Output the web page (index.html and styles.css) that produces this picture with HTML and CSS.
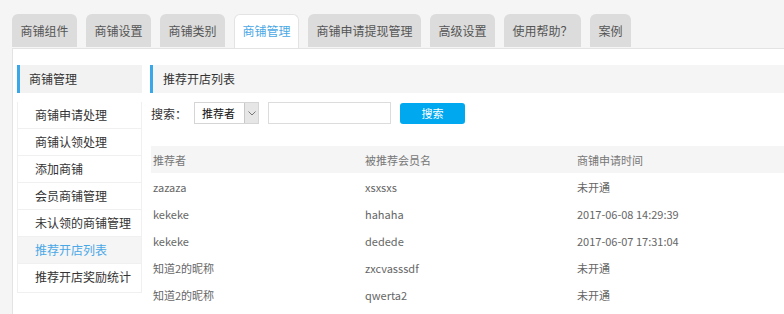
FILE: index.html
```html
<!DOCTYPE html>
<html>

<head>
    <meta charset="utf-8">
    <link rel="stylesheet" href="styles.css">
</head>

<body>
    <div class="tabs">
        <div class="tab">商铺组件</div>
        <div class="tab">商铺设置</div>
        <div class="tab">商铺类别</div>
        <div class="tab tab_active">商铺管理</div>
        <div class="tab">商铺申请提现管理</div>
        <div class="tab">高级设置</div>
        <div class="tab">使用帮助？</div>
        <div class="tab">案例</div>
    </div>
    <div class="panel">
        <div class="side">
            <div class="side_title">商铺管理</div>
            <ul class="side_menu">
                <li>商铺申请处理</li>
                <li>商铺认领处理</li>
                <li>添加商铺</li>
                <li>会员商铺管理</li>
                <li>未认领的商铺管理</li>
                <li class="current">推荐开店列表</li>
                <li>推荐开店奖励统计</li>
            </ul>
        </div>
        <div class="main">
            <div class="main_title">推荐开店列表</div>
            <div class="search">
                <span class="search_label">搜索：</span>
                <div class="select">
                    <span class="select_text">推荐者</span>
                    <span class="select_arrow">
                        <svg width="8" height="5" viewBox="0 0 8 5"><path d="M0.5 0.5 L4 4 L7.5 0.5" fill="none" stroke="#777" stroke-width="1"/></svg>
                    </span>
                </div>
                <input type="text" class="search_input">
                <button class="search_btn">搜索</button>
            </div>
            <table class="list">
                <thead>
                    <tr>
                        <th>推荐者</th>
                        <th>被推荐会员名</th>
                        <th>商铺申请时间</th>
                    </tr>
                </thead>
                <tbody>
                    <tr><td>zazaza</td><td>xsxsxs</td><td>未开通</td></tr>
                    <tr><td>kekeke</td><td>hahaha</td><td>2017-06-08 14:29:39</td></tr>
                    <tr><td>kekeke</td><td>dedede</td><td>2017-06-07 17:31:04</td></tr>
                    <tr><td>知道2的昵称</td><td>zxcvasssdf</td><td>未开通</td></tr>
                    <tr><td>知道2的昵称</td><td>qwerta2</td><td>未开通</td></tr>
                </tbody>
            </table>
        </div>
    </div>
</body>

</html>
```

FILE: styles.css
```css
body {
    margin: 0;
    padding: 14px 0 0 12px;
    background-color: #f5f5f5;
    font-family: "Noto Sans CJK SC", sans-serif;
    font-size: 12px;
    color: #333;
    overflow: hidden;
}

.tabs {
    display: flex;
    gap: 9px;
    position: relative;
    z-index: 1;
}

.tab {
    height: 33px;
    line-height: 33px;
    padding: 0 8.5px;
    background-color: #dcdcdc;
    border-radius: 6px 6px 0 0;
    color: #555;
}

.tab_active {
    background-color: #fff;
    color: #4aa8e6;
    line-height: 31px;
    border: 1px solid #e3e3e3;
    border-bottom: none;
    padding: 0 7.5px;
}

.panel {
    display: flex;
    gap: 8px;
    background-color: #fff;
    border-top: 1px solid #e3e3e3;
    border-left: 1px solid #e3e3e3;
    padding: 16px 0 40px 4px;
}

.side {
    width: 125px;
    flex-shrink: 0;
}

.side_title {
    height: 28px;
    line-height: 28px;
    background-color: #f2f2f2;
    border-left: 3px solid #3aa8e8;
    padding-left: 9px;
    color: #333;
}

.side_menu {
    list-style: none;
    margin: 9px 0 0 0;
    padding: 0;
    border: 1px solid #f0f0f0;
    border-top: none;
}

.side_menu li {
    height: 26px;
    line-height: 26px;
    padding-left: 17px;
    border-bottom: 1px solid #f0f0f0;
    color: #333;
}

.side_menu li:last-child {
    border-bottom: none;
    height: 28px;
}

.side_menu .current {
    background-color: #f5f5f5;
    color: #4aa8e6;
}

.main {
    flex: 1;
    overflow: hidden;
}

.main_title {
    height: 28px;
    line-height: 28px;
    background-color: #f5f5f5;
    border-left: 3px solid #3aa8e8;
    padding-left: 10px;
    color: #333;
}

.search {
    display: flex;
    align-items: center;
    margin-top: 9px;
    height: 22px;
    padding-left: 1px;
}

.search_label {
    width: 43px;
}

.select {
    display: flex;
    width: 63px;
    height: 20px;
    border: 1px solid #d5d5d5;
    font-size: 11px;
    color: #111;
}

.select_text {
    flex: 1;
    line-height: 20px;
    padding-left: 7px;
}

.select_arrow {
    width: 13px;
    display: flex;
    align-items: center;
    justify-content: center;
    background-color: #e6e6e6;
    border-left: 1px solid #c8c8c8;
}

.search_input {
    width: 121px;
    height: 20px;
    margin-left: 9px;
    padding: 0;
    border: 1px solid #dcdcdc;
}

.search_btn {
    width: 65px;
    height: 21px;
    margin-left: 9px;
    border: none;
    border-radius: 3px;
    background-color: #00a9ef;
    color: #fff;
    font-family: "Noto Sans CJK SC", sans-serif;
    font-size: 11px;
    padding: 0;
}

.list {
    margin-top: 22px;
    margin-left: 1px;
    border-collapse: collapse;
    table-layout: fixed;
    width: 636px;
    font-size: 11px;
    color: #666;
}

.list th,
.list td {
    width: 210px;
    height: 27px;
    padding: 0 0 0 2px;
    text-align: left;
    font-weight: normal;
}

.list th {
    background-color: #f5f5f5;
    color: #777;
}
```
